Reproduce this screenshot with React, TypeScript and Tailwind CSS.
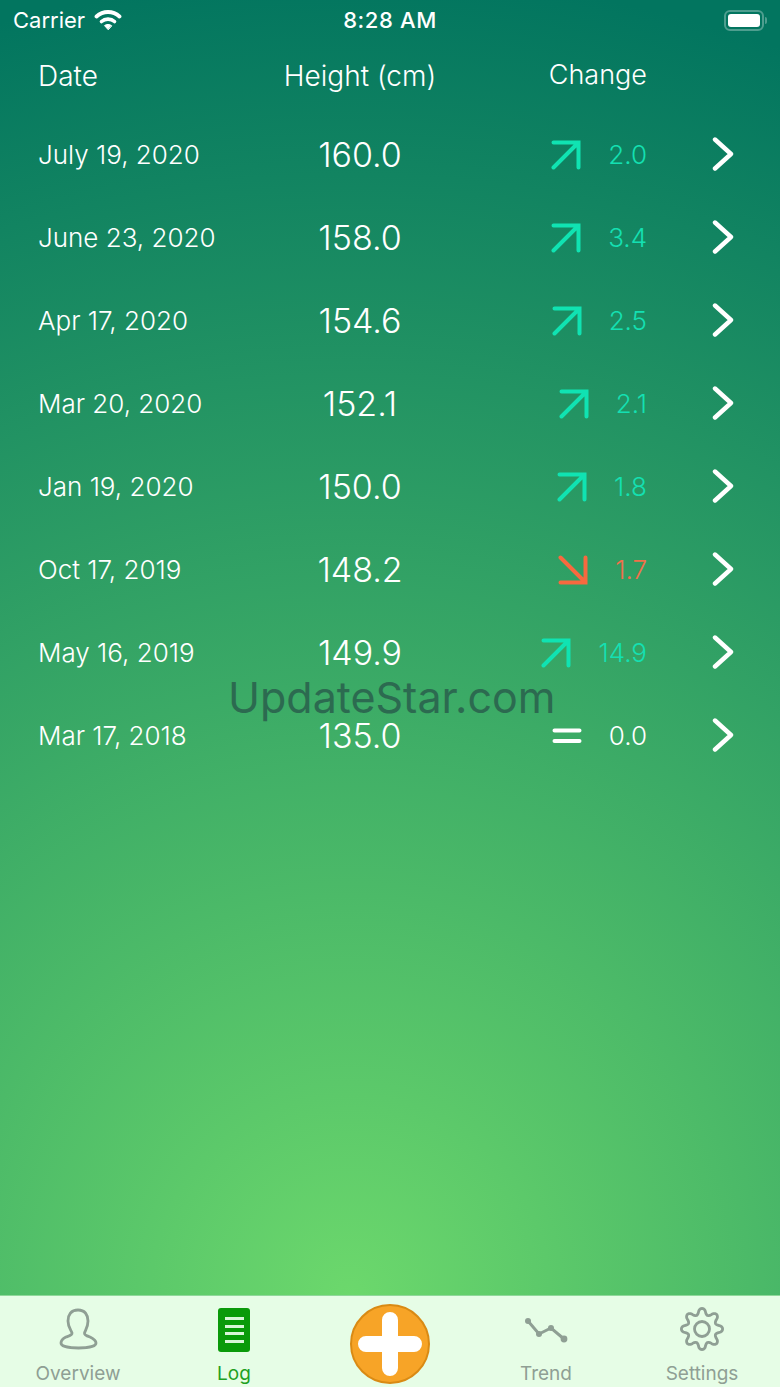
const ROWS = [
  { date: "July 19, 2020", height: "160.0", change: "2.0", dir: "up" },
  { date: "June 23, 2020", height: "158.0", change: "3.4", dir: "up" },
  { date: "Apr 17, 2020", height: "154.6", change: "2.5", dir: "up" },
  { date: "Mar 20, 2020", height: "152.1", change: "2.1", dir: "up" },
  { date: "Jan 19, 2020", height: "150.0", change: "1.8", dir: "up" },
  { date: "Oct 17, 2019", height: "148.2", change: "1.7", dir: "down" },
  { date: "May 16, 2019", height: "149.9", change: "14.9", dir: "up" },
  { date: "Mar 17, 2018", height: "135.0", change: "0.0", dir: "same" },
];

// 8 rounded teeth around the centre of a 44x44 box
function gearPath() {
  const pts: string[] = [];
  for (let i = 0; i < 160; i++) {
    const a = (i / 160) * Math.PI * 2 + Math.PI / 2;
    const wave = Math.cos(8 * (a - Math.PI / 2));
    const r = 17.6 + 3 * Math.sign(wave) * Math.pow(Math.abs(wave), 0.7);
    pts.push(`${(22 + r * Math.cos(a)).toFixed(2)} ${(22 + r * Math.sin(a)).toFixed(2)}`);
  }
  return `M${pts.join("L")}Z`;
}

function Trend({ dir }: { dir: string }) {
  if (dir === "same") {
    return (
      <svg width="30" height="30" viewBox="0 0 30 30" fill="none" stroke="#ffffff" strokeWidth="4" strokeLinecap="round">
        <path d="M2.5 9.5H27.5M2.5 20H27.5" />
      </svg>
    );
  }
  if (dir === "down") {
    return (
      <svg width="30" height="30" viewBox="0 0 30 30" fill="none" stroke="#f7693f" strokeWidth="4" strokeLinecap="round">
        <path d="M2.5 2.5L27 27M2.5 27.5H27.5V2.5" />
      </svg>
    );
  }
  return (
    <svg width="30" height="30" viewBox="0 0 30 30" fill="none" stroke="#10e3b2" strokeWidth="4" strokeLinecap="round">
      <path d="M2.5 27.5L27 3M2.5 2.5H27.5V27.5" />
    </svg>
  );
}

function Chevron() {
  return (
    <svg width="22" height="34" viewBox="0 0 22 34" fill="none" stroke="#ffffff" strokeWidth="4.4" strokeLinecap="round" strokeLinejoin="round">
      <path d="M3 2.5L19 17L3 31.5" />
    </svg>
  );
}

function changeColor(dir: string) {
  if (dir === "down") return "text-[#f0704a]";
  if (dir === "same") return "text-white";
  return "text-[#14e0b2]";
}

function StatusBar() {
  return (
    <div className="relative flex h-10 items-center justify-between pl-[13px] pr-[13px] text-white">
      <div className="flex items-center gap-[9px]">
        <span className="text-[22px]">Carrier</span>
        <svg width="28" height="22" viewBox="0 0 28 22" fill="none" stroke="#ffffff" strokeLinecap="round">
          <path d="M2.5 7.5C9 1.5 19 1.5 25.5 7.5" strokeWidth="3.8" />
          <path d="M7.5 12.5C11 9.3 17 9.3 20.5 12.5" strokeWidth="3.6" />
          <path d="M14 20.5L10.5 16.6C12.5 15 15.5 15 17.5 16.6Z" fill="#ffffff" strokeWidth="1" />
        </svg>
      </div>
      <span className="absolute left-0 right-0 text-center text-[22px] font-medium tracking-[0.6px]">8:28 AM</span>
      <div className="flex items-center gap-[1px]">
        <div className="flex h-[21px] w-[40px] items-center rounded-[6px] border-2 border-white/30 p-[2px]">
          <div className="h-full w-full rounded-[3px] bg-white" />
        </div>
        <div className="h-[7px] w-[2px] rounded-r-sm bg-white/30" />
      </div>
    </div>
  );
}

function Row({ date, height, change, dir }: { date: string; height: string; change: string; dir: string }) {
  return (
    <div className="flex h-[83px] items-center text-white">
      <div className="w-[270px] pl-[38px] text-[26px] font-light">{date}</div>
      <div className="w-[180px] text-center text-[34px] font-light">{height}</div>
      <div className="flex w-[197px] items-center justify-end gap-[27px]">
        <Trend dir={dir} />
        <span className={`text-[26px] font-light ${changeColor(dir)}`}>{change}</span>
      </div>
      <div className="-mt-[2px] pl-[65px]">
        <Chevron />
      </div>
    </div>
  );
}

function TabLabel({ children, active }: { children: string; active?: boolean }) {
  return (
    <span className={`text-[19px] leading-6 ${active ? "mt-[10px] text-[#1fa01f]" : "mt-[11px] text-[#8f9f94]"}`}>{children}</span>
  );
}

function TabBar() {
  return (
    <div className="flex h-[92px] items-start border-t border-[#8fd89a] bg-[#e6fde6]">
      <div className="flex w-[156px] flex-col items-center pt-[11px]">
        <svg width="39" height="44" viewBox="0 0 39 44" fill="none" stroke="#8f9f94" strokeWidth="2.8">
          <path d="M19 3C12 3 9 8 9 14C9 20 12 23 13 26C13.5 28 10 29 7 30C3 32 2 34 2 36C2 39 9 41 19.5 41C30 41 37 39 37 36C37 34 35 32 31 30C28 29 25 28 25.5 26C26.5 23 29 20 29 14C29 8 26 3 19 3Z" />
        </svg>
        <TabLabel>Overview</TabLabel>
      </div>
      <div className="flex w-[156px] flex-col items-center pt-[12px]">
        <div className="flex h-[44px] w-[32px] flex-col items-center justify-center gap-[4.5px] rounded-[3px] bg-[#0a9a0a]">
          <div className="h-[3px] w-[19px] bg-[#d9f5d9]" />
          <div className="h-[3px] w-[19px] bg-[#d9f5d9]" />
          <div className="h-[3px] w-[19px] bg-[#d9f5d9]" />
          <div className="h-[3px] w-[19px] bg-[#d9f5d9]" />
        </div>
        <TabLabel active>Log</TabLabel>
      </div>
      <div className="flex w-[156px] justify-center pt-[8px]">
        <div className="flex size-[80px] items-center justify-center rounded-full border-2 border-[#d98a14] bg-[#f7a427]">
          <svg width="66" height="66" viewBox="0 0 66 66" stroke="#ffffff" strokeWidth="16" strokeLinecap="round">
            <path d="M33 9V57M9 33H57" />
          </svg>
        </div>
      </div>
      <div className="flex w-[156px] flex-col items-center pt-[11px]">
        <svg width="46" height="44" viewBox="0 0 46 44" fill="none" stroke="#8f9f94" strokeWidth="3">
          <path d="M5 14L16 27L28 21L41 32" />
          <circle cx="5" cy="14" r="3" fill="#8f9f94" stroke="none" />
          <circle cx="16" cy="27" r="3" fill="#8f9f94" stroke="none" />
          <circle cx="28" cy="21" r="3" fill="#8f9f94" stroke="none" />
          <circle cx="41" cy="32" r="3.4" fill="#8f9f94" stroke="none" />
        </svg>
        <TabLabel>Trend</TabLabel>
      </div>
      <div className="flex w-[156px] flex-col items-center pt-[11px]">
        <svg width="44" height="44" viewBox="0 0 44 44" fill="none" stroke="#8f9f94" strokeWidth="2.8" strokeLinejoin="round">
          <path d={gearPath()} />
          <circle cx="22" cy="22" r="7.5" />
        </svg>
        <TabLabel>Settings</TabLabel>
      </div>
    </div>
  );
}

export default function App() {
  return (
    <div className="relative flex h-[1387px] w-[780px] flex-col overflow-hidden bg-[radial-gradient(circle_1320px_at_350px_1295px,#6cd86c_0%,#02755f_100%)] font-['Inter',sans-serif]">
      <StatusBar />
      <div className="flex h-[73px] items-center pb-[2px] text-[28px] font-light text-white">
        <div className="w-[270px] pl-[38px]">Date</div>
        <div className="w-[180px] text-center">Height (cm)</div>
        <div className="w-[197px] text-right text-[27px]">Change</div>
      </div>
      <div>
        {ROWS.map((r) => (
          <Row key={r.date} {...r} />
        ))}
      </div>
      <div className="flex-1" />
      <TabBar />
      <div className="absolute left-[228px] top-[670px] text-[43px] leading-[54px] text-[#2c6a50]">UpdateStar.com</div>
    </div>
  );
}
